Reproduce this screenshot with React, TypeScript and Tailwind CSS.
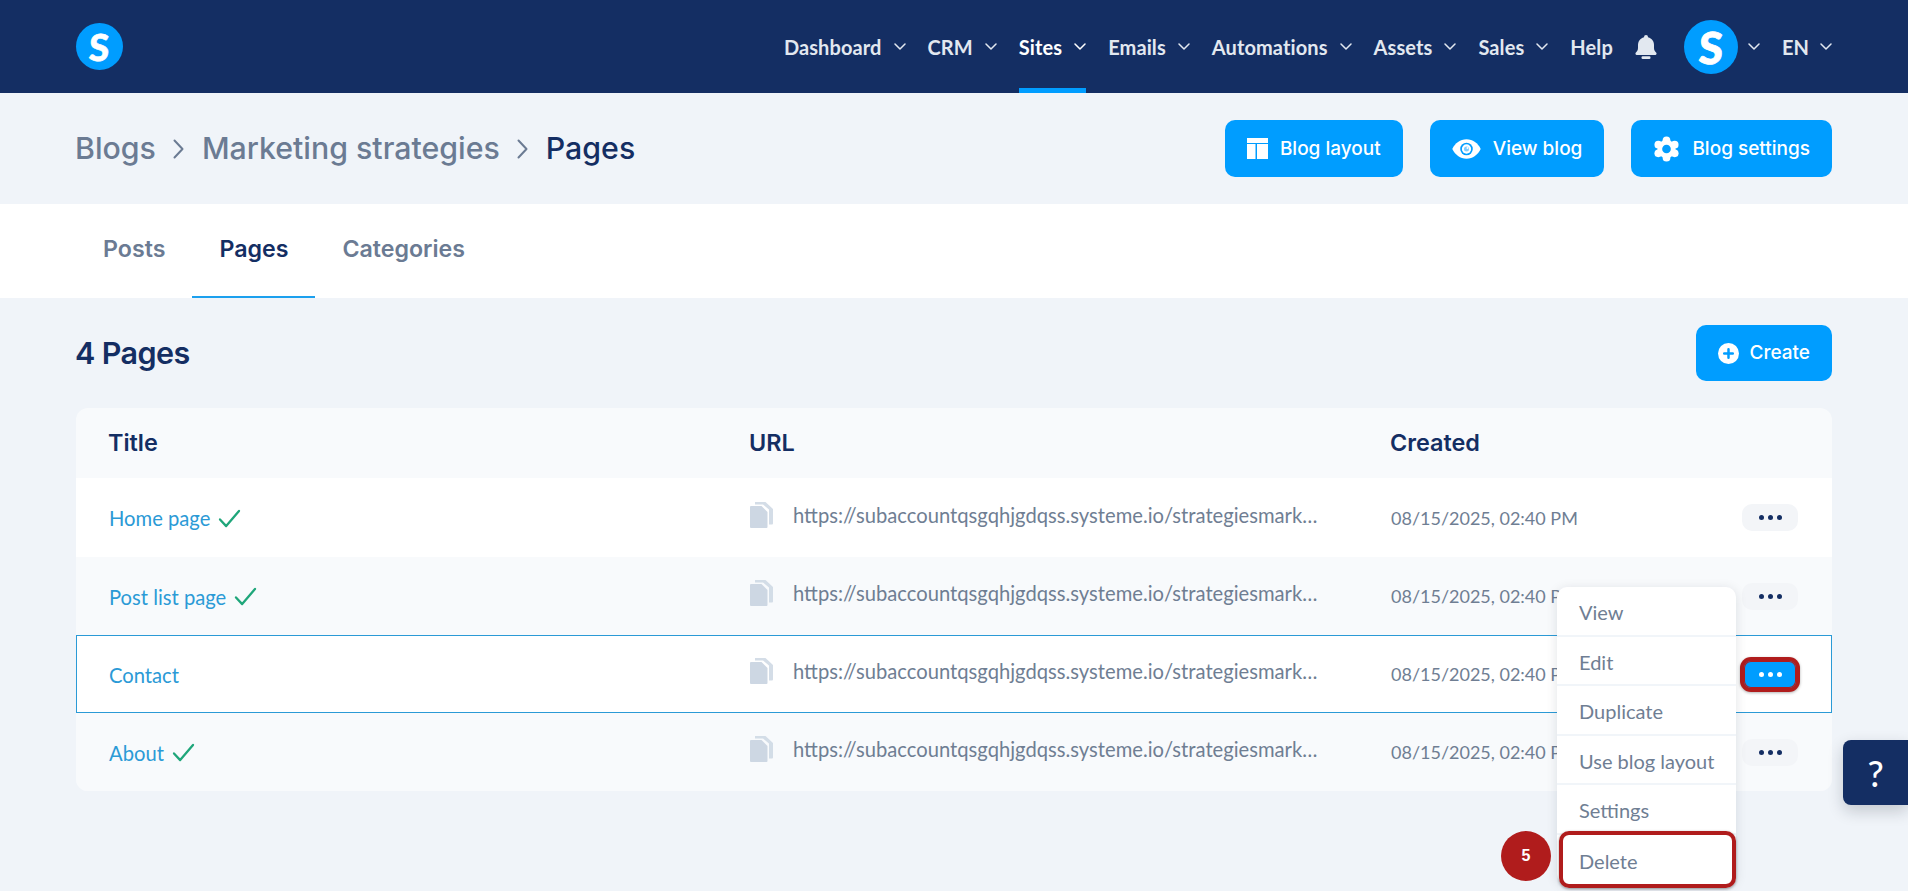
const navItems = [
  { label: "Dashboard", menu: true },
  { label: "CRM", menu: true },
  { label: "Sites", menu: true, active: true },
  { label: "Emails", menu: true },
  { label: "Automations", menu: true },
  { label: "Assets", menu: true },
  { label: "Sales", menu: true },
  { label: "Help", menu: false },
];

const pages = [
  { title: "Home page", done: true, h: "h-[79px]", bg: "bg-white" },
  { title: "Post list page", done: true, h: "h-[78px]", bg: "bg-[#f8fafc]" },
  { title: "Contact", done: false, h: "h-[78px]", bg: "bg-white ring-1 ring-inset ring-[#2b9ad6]", open: true },
  { title: "About", done: true, h: "h-[78px]", bg: "bg-[#f8fafc]" },
];

const menuItems = ["View", "Edit", "Duplicate", "Use blog layout", "Settings", "Delete"];

function Logo({ size }: { size: "sm" | "lg" }) {
  return (
    <div
      className={
        size === "sm"
          ? "flex h-[47px] w-[47px] items-center justify-center rounded-full bg-[#009dff] text-[37px] leading-none font-black text-white [-webkit-text-stroke:0.6px_white]"
          : "flex h-[54px] w-[54px] items-center justify-center rounded-full bg-[#009dff] text-[44px] leading-none font-black text-white [-webkit-text-stroke:0.8px_white]"
      }
    >
      <span className="-skew-x-3">S</span>
    </div>
  );
}

function Chevron() {
  return (
    <svg viewBox="0 0 12 7" className="h-[7px] w-[12px] shrink-0" fill="none" stroke="currentColor" strokeWidth="1.500" strokeLinecap="round" strokeLinejoin="round">
      <path d="M1 1l5 5 5-5" />
    </svg>
  );
}

function CrumbArrow() {
  return (
    <svg viewBox="0 0 11 20" className="mx-[17.500px] h-[20px] w-[11px] shrink-0" fill="none" stroke="currentColor" strokeWidth="2" strokeLinecap="round" strokeLinejoin="round">
      <path d="M1.500 1.500L9.500 10l-8 8.500" />
    </svg>
  );
}

function BellIcon() {
  return (
    <svg viewBox="0 0 22 24" className="mr-[27px] ml-[22px] h-[24px] w-[22px] shrink-0" fill="#e2e8f0">
      <path d="M11 0a2 2 0 0 1 2 2v.3C17 3.300 19 6.500 19 10v3c0 2 1 3.500 2.300 4.800.6.700.2 2.200-1 2.200H1.700c-1.200 0-1.600-1.500-1-2.200C2 16.500 3 15 3 13v-3C3 6.500 5 3.300 9 2.300V2a2 2 0 0 1 2-2Z" />
      <rect x="6.500" y="21.300" width="9" height="2.700" rx="1.200" />
    </svg>
  );
}

function LayoutIcon() {
  return (
    <svg viewBox="0 0 21 21" className="h-[21px] w-[21px] shrink-0" fill="currentColor">
      <rect x="0" y="0" width="21" height="5" />
      <rect x="0" y="6" width="8.500" height="15" />
      <rect x="10" y="6" width="11" height="15" />
    </svg>
  );
}

function EyeIcon() {
  return (
    <svg viewBox="0 0 30 20" className="h-[20px] w-[29px] shrink-0">
      <path fill="#fff" d="M15 0C8.500 0 3.200 4 .3 10c2.900 6 8.200 10 14.700 10s11.800-4 14.700-10C26.800 4 21.500 0 15 0Z" />
      <circle cx="15" cy="10" r="6.500" fill="#009dff" />
      <circle cx="15" cy="10" r="4.800" fill="#fff" />
      <circle cx="15" cy="10" r="2.600" fill="#7fcdff" />
      <circle cx="16" cy="9" r="1" fill="#fff" />
    </svg>
  );
}

function GearIcon() {
  return (
    <svg viewBox="0 0 28 26" className="h-[26px] w-[27px] shrink-0">
      <g fill="#fff">
        <circle cx="14" cy="13" r="9.500" />
        <circle cx="14" cy="4" r="4" />
        <circle cx="14" cy="22" r="4" />
        <circle cx="5.500" cy="8.500" r="4" />
        <circle cx="22.500" cy="8.500" r="4" />
        <circle cx="5.500" cy="17.500" r="4" />
        <circle cx="22.500" cy="17.500" r="4" />
      </g>
      <circle cx="14" cy="13" r="4.500" fill="#009dff" />
    </svg>
  );
}

function PlusCircle() {
  return (
    <svg viewBox="0 0 22 22" className="h-[21px] w-[21px] shrink-0">
      <circle cx="11" cy="11" r="11" fill="#fff" />
      <path d="M11 6.500v9M6.500 11h9" stroke="#009dff" strokeWidth="2.600" strokeLinecap="round" />
    </svg>
  );
}

function CopyIcon() {
  return (
    <svg viewBox="0 0 23 26" className="h-[26px] w-[23px] shrink-0" fill="#cdd7e3">
      <path d="M5 0h10.500L23 7v14.500a1 1 0 0 1-1 1h-3V7.500L13 2.500H5V0Z" opacity=".85" />
      <path d="M1 4h10.500l6 6v15a1 1 0 0 1-1 1H1a1 1 0 0 1-1-1V5a1 1 0 0 1 1-1Z" />
    </svg>
  );
}

function Check() {
  return (
    <svg viewBox="0 0 24 20" className="h-[19px] w-[23px] shrink-0" fill="none" stroke="#1fa67a" strokeWidth="2.400" strokeLinecap="round" strokeLinejoin="round">
      <path d="M2 11l6.500 7L22 2" />
    </svg>
  );
}

function Dots({ active }: { active?: boolean }) {
  return (
    <div
      className={
        active
          ? "mx-[2px] flex h-[27px] w-[52px] items-center justify-center gap-[4px] rounded-[7px] bg-[#009dff] text-white shadow-[inset_0_0_0_1px_#b01c1c,0_0_0_4px_#b01c1c,0_1px_3px_4px_rgba(0,0,0,0.3)]"
          : "flex h-[27px] w-[56px] items-center justify-center gap-[4px] rounded-[10px] bg-[#f3f5f8] text-[#142e63]"
      }
    >
      <span className="h-[5px] w-[5px] rounded-full bg-current" />
      <span className="h-[5px] w-[5px] rounded-full bg-current" />
      <span className="h-[5px] w-[5px] rounded-full bg-current" />
    </div>
  );
}

function ActionButton({ icon, label }: { icon: React.ReactNode; label: string }) {
  return (
    <button className="flex h-[57px] items-center gap-[12px] rounded-[10px] bg-[#009dff] px-[22px] text-[19px] font-medium text-white">
      {icon}
      <span className="pt-[2px]">{label}</span>
    </button>
  );
}

export default function App() {
  return (
    <div className="relative h-[891px] overflow-hidden bg-[#f0f4f9] font-['Inter',sans-serif]">
      <header className="flex h-[93px] items-center justify-between bg-[#142e63] px-[76px] font-['Lato',sans-serif]">
        <Logo size="sm" />
        <nav className="flex h-full items-center tracking-[0.1px]">
          <div className="flex h-full items-stretch gap-[22px]">
            {navItems.map((item) => (
              <div
                key={item.label}
                className={
                  item.active
                    ? "flex items-center gap-[12px] border-b-[5px] border-[#009dff] pt-[5px] text-[20px] font-bold text-white"
                    : "flex items-center gap-[12px] border-b-[5px] border-transparent pt-[5px] text-[20px] font-bold text-[#e2e8f0]"
                }
              >
                {item.label}
                {item.menu && <Chevron />}
              </div>
            ))}
          </div>
          <BellIcon />
          <Logo size="lg" />
          <div className="mr-[22px] ml-[10px] text-[#e2e8f0]">
            <Chevron />
          </div>
          <span className="text-[20px] font-bold text-[#e2e8f0]">EN</span>
          <div className="ml-[11px] text-[#e2e8f0]">
            <Chevron />
          </div>
        </nav>
      </header>

      <div className="flex h-[111px] items-center justify-between px-[76px]">
        <div className="-ml-[1px] flex items-center text-[30.300px] font-medium text-[#6b7b93]">
          <span>Blogs</span>
          <CrumbArrow />
          <span>Marketing strategies</span>
          <CrumbArrow />
          <span className="text-[#142e63]">Pages</span>
        </div>
        <div className="flex gap-[27px]">
          <ActionButton icon={<LayoutIcon />} label="Blog layout" />
          <ActionButton icon={<EyeIcon />} label="View blog" />
          <ActionButton icon={<GearIcon />} label="Blog settings" />
        </div>
      </div>

      <div className="flex h-[94px] bg-white pl-[76px] text-[23.200px] font-semibold text-[#6b7b93]">
        <div className="flex items-center px-[27px] pb-[3px]">Posts</div>
        <div className="flex items-center border-b-[2px] border-[#1ca0ee] px-[27px] pb-[1px] text-[#142e63]">Pages</div>
        <div className="flex items-center px-[27px] pb-[3px]">Categories</div>
      </div>

      <div className="flex h-[110px] items-center justify-between px-[76px]">
        <h1 className="-ml-[1px] text-[30.500px] font-semibold tracking-[-0.6px] text-[#142e63]">4 Pages</h1>
        <button className="flex h-[56px] items-center gap-[11px] rounded-[10px] bg-[#009dff] px-[22px] text-[19px] font-medium text-white">
          <PlusCircle />
          Create
        </button>
      </div>

      <div className="mx-[76px] overflow-hidden rounded-[12px] bg-[#f8fafc]">
        <div className="grid h-[70px] grid-cols-[641px_641px_1fr] items-center pl-[32px] text-[23.400px] font-semibold text-[#142e63]">
          <span>Title</span>
          <span>URL</span>
          <span>Created</span>
        </div>
        {pages.map((page) => (
          <div key={page.title} className={`grid grid-cols-[641px_641px_1fr] items-center pl-[33px] font-['Lato',sans-serif] ${page.h} ${page.bg}`}>
            <div className="flex items-center gap-[8px] pt-[2px] text-[20.200px] text-[#2b9ad6]">
              {page.title}
              {page.done && <Check />}
            </div>
            <div className="flex items-center gap-[20px] pb-[5px] text-[20.200px] text-[#6f7e93]">
              <CopyIcon />
              <span className="whitespace-nowrap">https://subaccountqsgqhjgdqss.systeme.io/strategiesmark…</span>
            </div>
            <div className="flex items-center justify-between pr-[34px] text-[18px] text-[#6f7e93]">
              <span className="pt-[1px]">08/15/2025, 02:40 PM</span>
              <Dots active={page.open} />
            </div>
          </div>
        ))}
      </div>

      <div className="absolute top-[587px] left-[1557px] w-[179px] rounded-[10px] bg-white font-['Lato',sans-serif] text-[20px] text-[#6f7e93] shadow-[0_2px_12px_rgba(15,23,42,0.12)]">
        {menuItems.map((item) => (
          <div key={item} className="flex h-[49.500px] items-center border-b-2 border-[#f1f5f9] pt-[3px] pl-[22px] last:border-b-0">
            {item}
          </div>
        ))}
      </div>
      <div className="absolute top-[831px] left-[1559px] h-[57px] w-[177px] rounded-[10px] border-[4px] border-[#b01c1c] shadow-[0_1px_3px_rgba(0,0,0,0.4)]" />

      <div className="absolute top-[831px] left-[1501px] flex h-[50px] w-[50px] items-center justify-center rounded-full bg-[#b01c1c] font-['Liberation_Sans',sans-serif] text-[16px] font-bold text-white">
        5
      </div>

      <div className="absolute top-[740px] left-[1843px] flex h-[65px] w-[65px] items-center justify-center rounded-l-[8px] bg-[#142e63] font-['Lato',sans-serif] text-[36px] font-medium text-white shadow-[0_6px_16px_rgba(15,23,42,0.2)]">
        ?
      </div>
    </div>
  );
}
